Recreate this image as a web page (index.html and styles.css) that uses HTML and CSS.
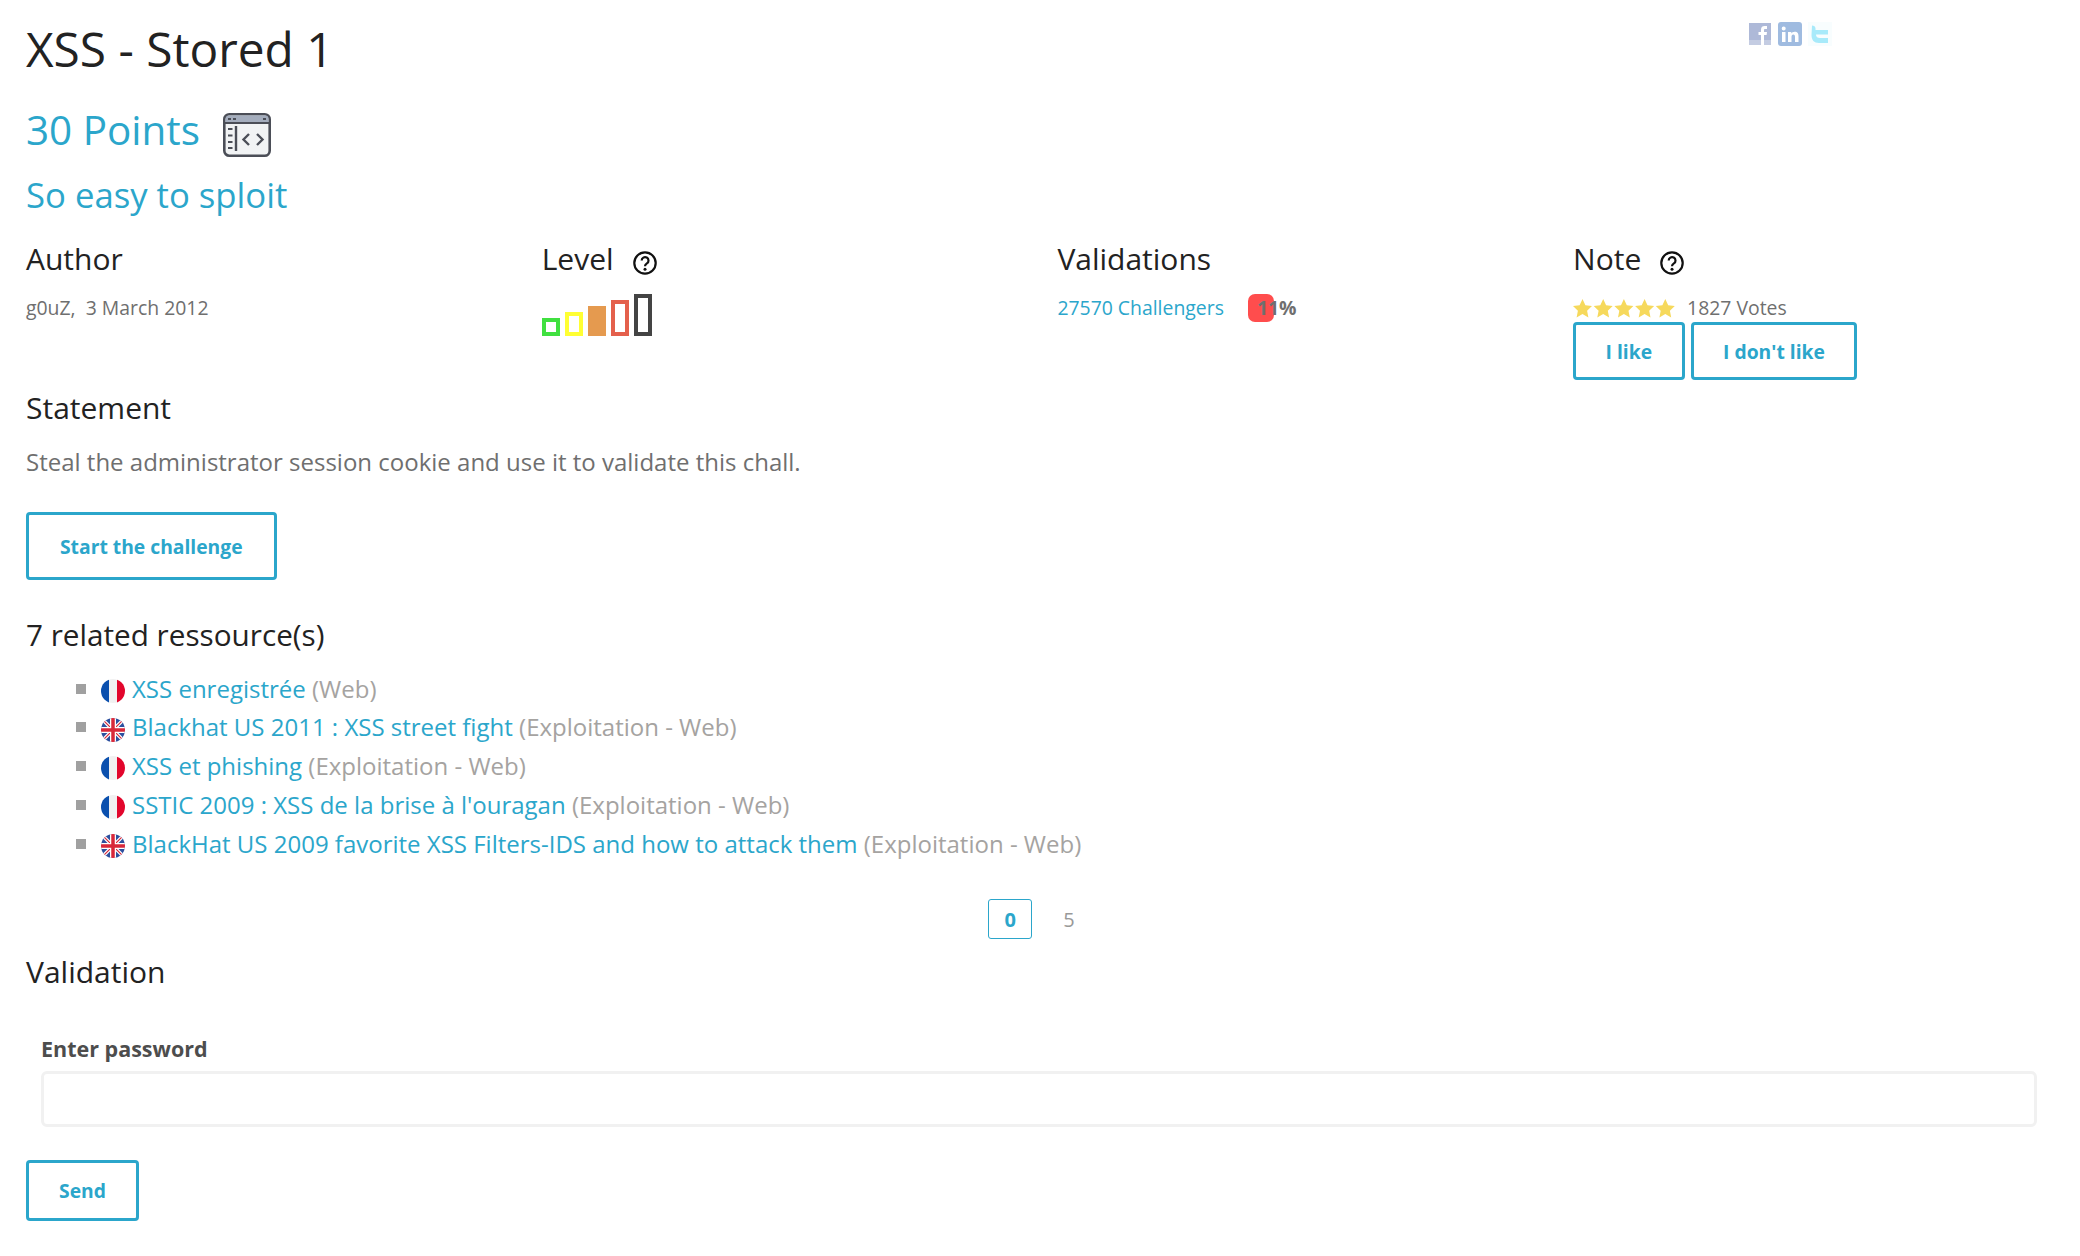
FILE: index.html
```html
<!DOCTYPE html>
<html lang="en">
<head>
<meta charset="utf-8">
<title>XSS - Stored 1</title>
<link rel="stylesheet" href="styles.css">
</head>
<body>
<main class="page">
  <h1 class="title">XSS - Stored 1</h1>
  <h2 class="points">30 Points
    <svg class="cat" viewBox="0 0 48 44"><rect x="1.300" y="1.300" width="45.400" height="41.400" rx="5" fill="#f1f3f4" stroke="#4b4e57" stroke-width="2.600"/><path d="M2.500 6a3.500 3.500 0 0 1 3.500-3.500h36a3.500 3.500 0 0 1 3.500 3.500v3.500h-43z" fill="#a4adbd"/><path d="M2 10h44" stroke="#4b4e57" stroke-width="2.200"/><path d="M5 6h3M10 6h3M40 6h3" stroke="#4b4e57" stroke-width="2"/><path d="M13 13v25" stroke="#4b4e57" stroke-width="2.400"/><path d="M5 16h4.500M5 22.500h4.500M5 29h4.500M5 35h4.500" stroke="#4b4e57" stroke-width="2.200"/><path d="M26 21l-5.500 5.500 5.500 5.500M34 21l5.500 5.500-5.500 5.500" fill="none" stroke="#4b4e57" stroke-width="2.400"/></svg>
  </h2>
  <h3 class="sub">So easy to sploit</h3>

  <section class="meta">
    <div class="col">
      <h4>Author</h4>
      <p class="small">g0uZ,&nbsp; 3 March 2012</p>
    </div>
    <div class="col">
      <h4>Level <svg class="help" viewBox="0 0 24 24"><circle cx="12" cy="12" r="10.700" fill="none" stroke="#111" stroke-width="2.200"/><path d="M8.700 9.500a3.400 3.400 0 1 1 5.200 2.900c-1.300.8-1.900 1.400-1.900 2.900" fill="none" stroke="#111" stroke-width="2.200"/><circle cx="12" cy="18.300" r="1.500" fill="#111"/></svg></h4>
      <div class="levels">
        <i class="lv l1"></i><i class="lv l2"></i><i class="lv l3"></i><i class="lv l4"></i><i class="lv l5"></i>
      </div>
    </div>
    <div class="col">
      <h4>Validations</h4>
      <p class="small"><a href="#">27570 Challengers</a> <span class="pct">11%</span></p>
    </div>
    <div class="col">
      <h4>Note <svg class="help" viewBox="0 0 24 24"><circle cx="12" cy="12" r="10.700" fill="none" stroke="#111" stroke-width="2.200"/><path d="M8.700 9.500a3.400 3.400 0 1 1 5.200 2.900c-1.300.8-1.900 1.400-1.900 2.900" fill="none" stroke="#111" stroke-width="2.200"/><circle cx="12" cy="18.300" r="1.500" fill="#111"/></svg></h4>
      <p class="small votes">
        <svg class="stars" viewBox="0 0 102 19"><use href="#st"/><use href="#st" x="20.700"/><use href="#st" x="41.400"/><use href="#st" x="62.100"/><use href="#st" x="82.800"/></svg>
        1827 Votes</p>
      <div class="likes"><a class="btn btn-s" href="#">I like</a><a class="btn btn-s" href="#">I don't like</a></div>
    </div>
  </section>

  <h4 class="head statement">Statement</h4>
  <p class="text">Steal the administrator session cookie and use it to validate this chall.</p>
  <a class="btn btn-l" href="#">Start the challenge</a>

  <h4 class="head related">7 related ressource(s)</h4>
  <ul class="res">
    <li><svg class="flag"><use href="#fr"/></svg><a href="#">XSS enregistrée</a> (Web)</li>
    <li><svg class="flag"><use href="#gb"/></svg><a href="#">Blackhat US 2011 : XSS street fight</a> (Exploitation - Web)</li>
    <li><svg class="flag"><use href="#fr"/></svg><a href="#">XSS et phishing</a> (Exploitation - Web)</li>
    <li><svg class="flag"><use href="#fr"/></svg><a href="#">SSTIC 2009 : XSS de la brise à l'ouragan</a> (Exploitation - Web)</li>
    <li><svg class="flag"><use href="#gb"/></svg><a href="#">BlackHat US 2009 favorite XSS Filters-IDS and how to attack them</a> (Exploitation - Web)</li>
  </ul>
  <nav class="pager"><a class="cur" href="#">0</a><a href="#">5</a></nav>

  <h4 class="head validation">Validation</h4>
  <form class="form">
    <label class="lab" for="pw">Enter password</label>
    <input class="inp" id="pw" type="text">
  </form>
  <a class="btn btn-m" href="#">Send</a>
</main>

<aside class="share">
  <svg class="soc soc-f" viewBox="0 0 22 22"><rect width="22" height="22" fill="#aeb9d8"/><rect y="17" width="22" height="5" fill="#c4cce2"/><path d="M12 22V12H9.500V9H12V6.500C12 4 13.500 3 15.500 3H18v3h-1.800c-.9 0-1.200.4-1.200 1.200V9h3l-.4 3H15v10z" fill="#fff"/></svg>
  <svg class="soc" viewBox="0 0 24 24"><rect width="24" height="24" rx="3" fill="#9fbbe0"/><path d="M4 10h3.500v10H4zM5.700 4.500a2 2 0 1 1 0 4 2 2 0 0 1 0-4zM10 10h3.300v1.500c.6-1 1.800-1.800 3.400-1.800 3 0 3.800 2 3.800 4.800V20H17v-5c0-1.500-.4-2.500-1.700-2.500s-1.800 1-1.800 2.500v5H10z" fill="#fff"/></svg>
  <svg class="soc" viewBox="0 0 24 24"><rect width="24" height="24" fill="#f8fdfe"/><path d="M4 3.500c2 0 3.500 1 3.500 3V8H20v4.500H8c0 2.500 1.500 3.500 4 3.500h8v5h-9c-5 0-7.500-3-7.500-8z" fill="#a8eafa"/></svg>
</aside>

<svg class="defs" width="0" height="0">
  <defs>
    <clipPath id="c"><circle cx="12" cy="12" r="12"/></clipPath>
    <path id="st" d="M9.500 0l2.900 6.300 6.600.8-4.900 4.600 1.300 6.800-5.900-3.400-5.900 3.400 1.300-6.800L0 7.100l6.600-.8z" fill="#f6d95c"/>
    <symbol id="fr" viewBox="0 0 24 24"><g clip-path="url(#c)"><rect width="8" height="24" fill="#0b50ae"/><rect x="8" width="8" height="24" fill="#f1f1f1"/><rect x="16" width="8" height="24" fill="#e2062c"/></g></symbol>
    <symbol id="gb" viewBox="0 0 24 24"><g clip-path="url(#c)"><rect width="24" height="24" fill="#2c4f9e"/><path d="M0 0l24 24M24 0L0 24" stroke="#fff" stroke-width="3.500"/><path d="M0 0l24 24M24 0L0 24" stroke="#d8283a" stroke-width="1.200"/><path d="M12 0v24M0 12h24" stroke="#fff" stroke-width="6"/><path d="M12 0v24M0 12h24" stroke="#d8283a" stroke-width="3.500"/></g></symbol>
  </defs>
</svg>
</body>
</html>
```
FILE: styles.css
```css
* { box-sizing: border-box; }
html, body { margin: 0; padding: 0; background: #fff; }
body { font-family: "Open Sans", "Liberation Sans", sans-serif; color: #6f6f6f; position: relative; height: 1256px; overflow: hidden; }
a { color: #2ba6cb; text-decoration: none; }
.page { padding: 0 43px 0 26px; }
h1, h2, h3, h4, p, ul { margin: 0; font-weight: 400; }
.title { font-size: 47.800px; line-height: 68px; color: #222; padding-top: 15px; }
.points { font-size: 40.400px; line-height: 56px; color: #2ba6cb; margin-top: 19px; display: flex; align-items: center; gap: 23px; }
.cat { width: 48px; height: 44px; margin-top: 10px; }
.sub { font-size: 34.700px; line-height: 50px; color: #2ba6cb; margin-top: 12px; }
.meta { display: grid; grid-template-columns: repeat(4, 515.700px); margin-top: 18px; height: 149px; }
.col h4 { font-size: 30px; line-height: 42px; color: #222; display: flex; align-items: center; gap: 19px; }
.help { width: 24px; height: 24px; margin-top: 8px; }
.small { font-size: 19.400px; line-height: 28px; margin-top: 14px; color: #6f6f6f; }
.levels { display: flex; align-items: flex-end; gap: 5px; height: 42px; margin-top: 14px; }
.lv { display: block; width: 18px; border: 4px solid; }
.l1 { height: 18px; border-color: #40e040; }
.l2 { height: 24px; border-color: #ffff33; }
.l3 { height: 30px; border-color: #e59a4f; background: #e59a4f; }
.l4 { height: 36px; border-color: #e4604c; }
.l5 { height: 42px; border-color: #444; }
.pct { position: relative; z-index: 0; display: inline-block; font-weight: 700; margin-left: 19px; padding-left: 9px; color: #6f6f6f; }
.pct::before { content: ""; position: absolute; z-index: -1; left: 0; top: 0; width: 26px; height: 28px; border-radius: 7px; background: #ff4d4d; }
.votes { display: flex; gap: 12px; align-items: center; }
.stars { width: 102px; height: 19px; flex: none; }
.likes { display: flex; gap: 6px; margin-top: 0; }
.btn { display: inline-flex; align-items: center; justify-content: center; border: 3px solid #2ba6cb; border-radius: 4px; font-weight: 700; font-size: 19.300px; color: #2ba6cb; background: #fff; }
.btn-s { height: 58px; padding: 0 29.500px; }
.head { font-size: 30px; line-height: 42px; color: #222; }
.text { font-size: 24px; line-height: 34px; color: #6f6f6f; margin-top: 16px; }
.btn-l { height: 68px; padding: 0 31px; margin-top: 33px; }
.related { margin-top: 34px; font-size: 29.700px; }
.res { list-style: none; padding: 0 0 0 50px; margin-top: 13.500px; font-size: 24px; line-height: 38.800px; color: #a5a3a1; }
.res li { position: relative; padding-left: 25px; display: flex; align-items: center; white-space: pre; }
.res li::before { content: ""; position: absolute; left: 0; top: 14px; width: 10px; height: 10px; background: #a0a0a0; }
.flag { width: 24px; height: 24px; margin-right: 7px; margin-top: 4px; flex: none; }
.pager { display: flex; justify-content: center; gap: 31px; margin-top: 36px; font-size: 20px; align-items: center; }
.pager a { color: #999; }
.pager .cur { width: 44px; height: 40px; display: flex; align-items: center; justify-content: center; border: 1px solid #2ba6cb; border-radius: 3px; font-weight: 700; color: #2ba6cb; }
.validation { margin-top: 12px; }
.form { padding: 0 0 0 15px; margin-top: 41px; }
.lab { display: block; font-size: 21.500px; font-weight: 700; color: #4d4d4d; line-height: 30px; }
.inp { display: block; width: 100%; height: 56px; margin-top: 7px; border: 3px solid #f1f1f1; border-radius: 6px; background: #fff; }
.btn-m { height: 61px; width: 113px; margin-top: 33px; }
.share { position: absolute; left: 1749px; top: 22px; display: flex; align-items: flex-start; gap: 6px; filter: blur(.4px); }
.soc { width: 24px; height: 24px; display: block; }
.soc-f { width: 22px; height: 22px; margin-top: 1px; margin-right: 1px; }
.defs { position: absolute; }
```
